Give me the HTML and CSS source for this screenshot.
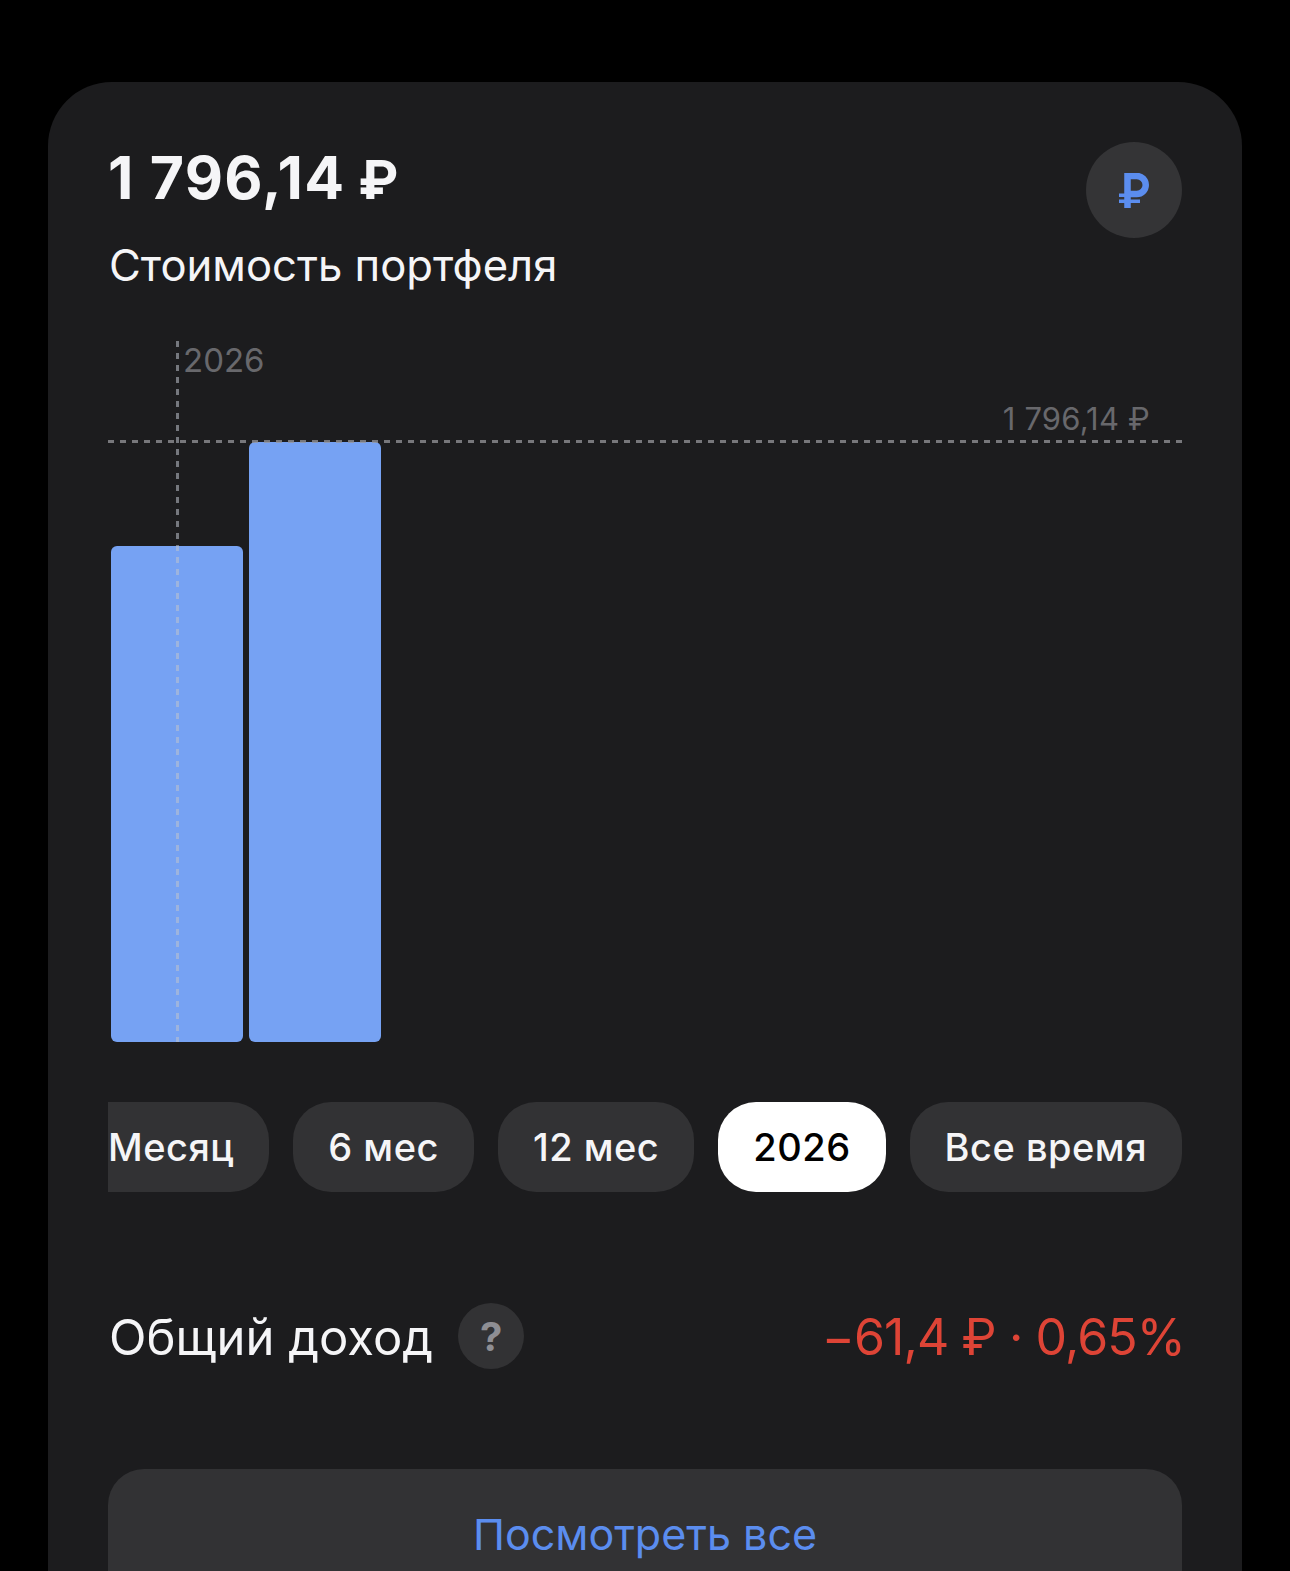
FILE: index.html
```html
<!DOCTYPE html>
<html lang="ru">
<head>
  <meta charset="UTF-8">
  <meta name="viewport" content="width=device-width, initial-scale=1">
  <title>Стоимость портфеля</title>
  <link rel="stylesheet" href="styles.css">
</head>
<body>

  <div class="card">
    <div class="header">
      <div>
        <div class="total">
          <span>1 796,14</span>
          <span class="total-rub">₽</span>
        </div>
        <div class="subtitle">Стоимость портфеля</div>
      </div>
      <div class="currency">
        <svg width="30" height="35" viewBox="0 0 30 35">
          <path d="M8.5 35V3h9.25a9 9 0 0 1 0 18H8.5" fill="none" stroke="#5b8def" stroke-width="6.5"/>
          <path d="M0 22.3h9M0 28.3h21" fill="none" stroke="#5b8def" stroke-width="3.5"/>
        </svg>
      </div>
    </div>

    <!-- Chart -->
    <div class="chart">
      <div class="v-line"></div>
      <div class="h-line"></div>
      <span class="year-label">2026</span>
      <span class="max-label">1 796,14 ₽</span>
      <div class="bars">
        <div class="bar bar-low"></div>
        <div class="bar bar-high"></div>
      </div>
    </div>

    <div class="periods">
      <div class="pill">Месяц</div>
      <div class="pill">6 мес</div>
      <div class="pill">12 мес</div>
      <div class="pill active">2026</div>
      <div class="pill">Все время</div>
    </div>

    <div class="income">
      <div class="income-title">
        <span class="income-label">Общий доход</span>
        <span class="help">?</span>
      </div>
      <div class="income-value">−61,4 ₽ · 0,65%</div>
    </div>

    <div class="more-btn">Посмотреть все</div>
  </div>

</body>
</html>
```

FILE: styles.css
```css
html, body {
  height: 100%;
}

body {
  margin: 0;
  background-color: #000;
  font-family: Inter, "Noto Sans", sans-serif;
  color: #f5f5f7;
  overflow: hidden;
}

.card {
  margin: 82px 48px 0 48px;
  padding: 60px 60px 0;
  height: 1489px;
  box-sizing: border-box;
  background-color: #1c1c1e;
  border-radius: 64px 64px 0 0;
}

.header {
  display: flex;
  justify-content: space-between;
  align-items: flex-start;
}

.total {
  display: flex;
  align-items: baseline;
  gap: 13px;
  height: 72px;
  font-size: 59px;
  line-height: 72px;
  font-weight: 700;
  letter-spacing: 1.2px;
}

.total-rub {
  font-size: 54px;
  line-height: 1;
  letter-spacing: 0;
}

.subtitle {
  margin: 26px 0 0 1px;
  font-size: 43.6px;
  line-height: 52px;
  font-weight: 400;
}

.currency {
  width: 96px;
  height: 96px;
  border-radius: 50%;
  background-color: #343436;
  display: flex;
  align-items: center;
  justify-content: center;
}

/* Chart */
.chart {
  position: relative;
  margin-top: 49px;
  height: 701px;
  display: flex;
  flex-direction: column;
  justify-content: flex-end;
}

.bars {
  display: flex;
  align-items: flex-end;
  gap: 6px;
  padding-left: 3px;
}

.bar {
  width: 132px;
  background-color: #76a2f3;
  border-radius: 6px;
}

.bar-low {
  height: 496px;
}

.bar-high {
  height: 600px;
}

.v-line {
  position: absolute;
  left: 68px;
  top: 0;
  bottom: 0;
  width: 3px;
  background: repeating-linear-gradient(to bottom, rgba(190, 195, 205, 0.55) 0 6px, transparent 6px 12px);
  z-index: 1;
}

.h-line {
  position: absolute;
  left: 0;
  right: 0;
  top: 99px;
  height: 3px;
  background: repeating-linear-gradient(to right, rgba(150, 150, 155, 0.75) 0 6px, transparent 6px 12px);
  z-index: 1;
}

.year-label,
.max-label {
  position: absolute;
  color: #68686c;
  font-size: 33px;
  line-height: 40px;
}

.year-label {
  left: 75px;
  top: -1px;
}

.max-label {
  right: 32px;
  top: 58px;
  font-size: 31px;
  letter-spacing: 0.2px;
}

/* Period switcher */
.periods {
  margin-top: 60px;
  display: flex;
  justify-content: flex-end;
  gap: 24px;
  overflow: hidden;
}

.pill {
  flex-shrink: 0;
  height: 90px;
  padding: 0 35px;
  border-radius: 38px;
  background-color: #323234;
  display: flex;
  align-items: center;
  font-size: 38px;
  font-weight: 550;
  letter-spacing: 0.5px;
}

.pill.active {
  background-color: #fff;
  color: #000;
}

.income {
  margin-top: 111px;
  display: flex;
  justify-content: space-between;
  align-items: center;
}

.income-title {
  display: flex;
  align-items: center;
  gap: 25px;
  font-size: 49px;
}

.income-label {
  margin-left: 1px;
  padding-top: 2px;
}

.help {
  width: 66px;
  height: 66px;
  border-radius: 50%;
  background-color: #323234;
  color: #8e8e93;
  font-size: 40px;
  font-weight: 700;
  display: flex;
  align-items: center;
  justify-content: center;
}

.income-value {
  margin-right: -3px;
  padding-top: 2px;
  color: #de4436;
  font-size: 50px;
  letter-spacing: -0.9px;
}

.more-btn {
  margin-top: 100px;
  height: 140px;
  padding-top: 35px;
  box-sizing: border-box;
  border-radius: 36px 36px 0 0;
  background-color: #323234;
  color: #5b8def;
  text-align: center;
  font-size: 43px;
  line-height: 60px;
}
```
